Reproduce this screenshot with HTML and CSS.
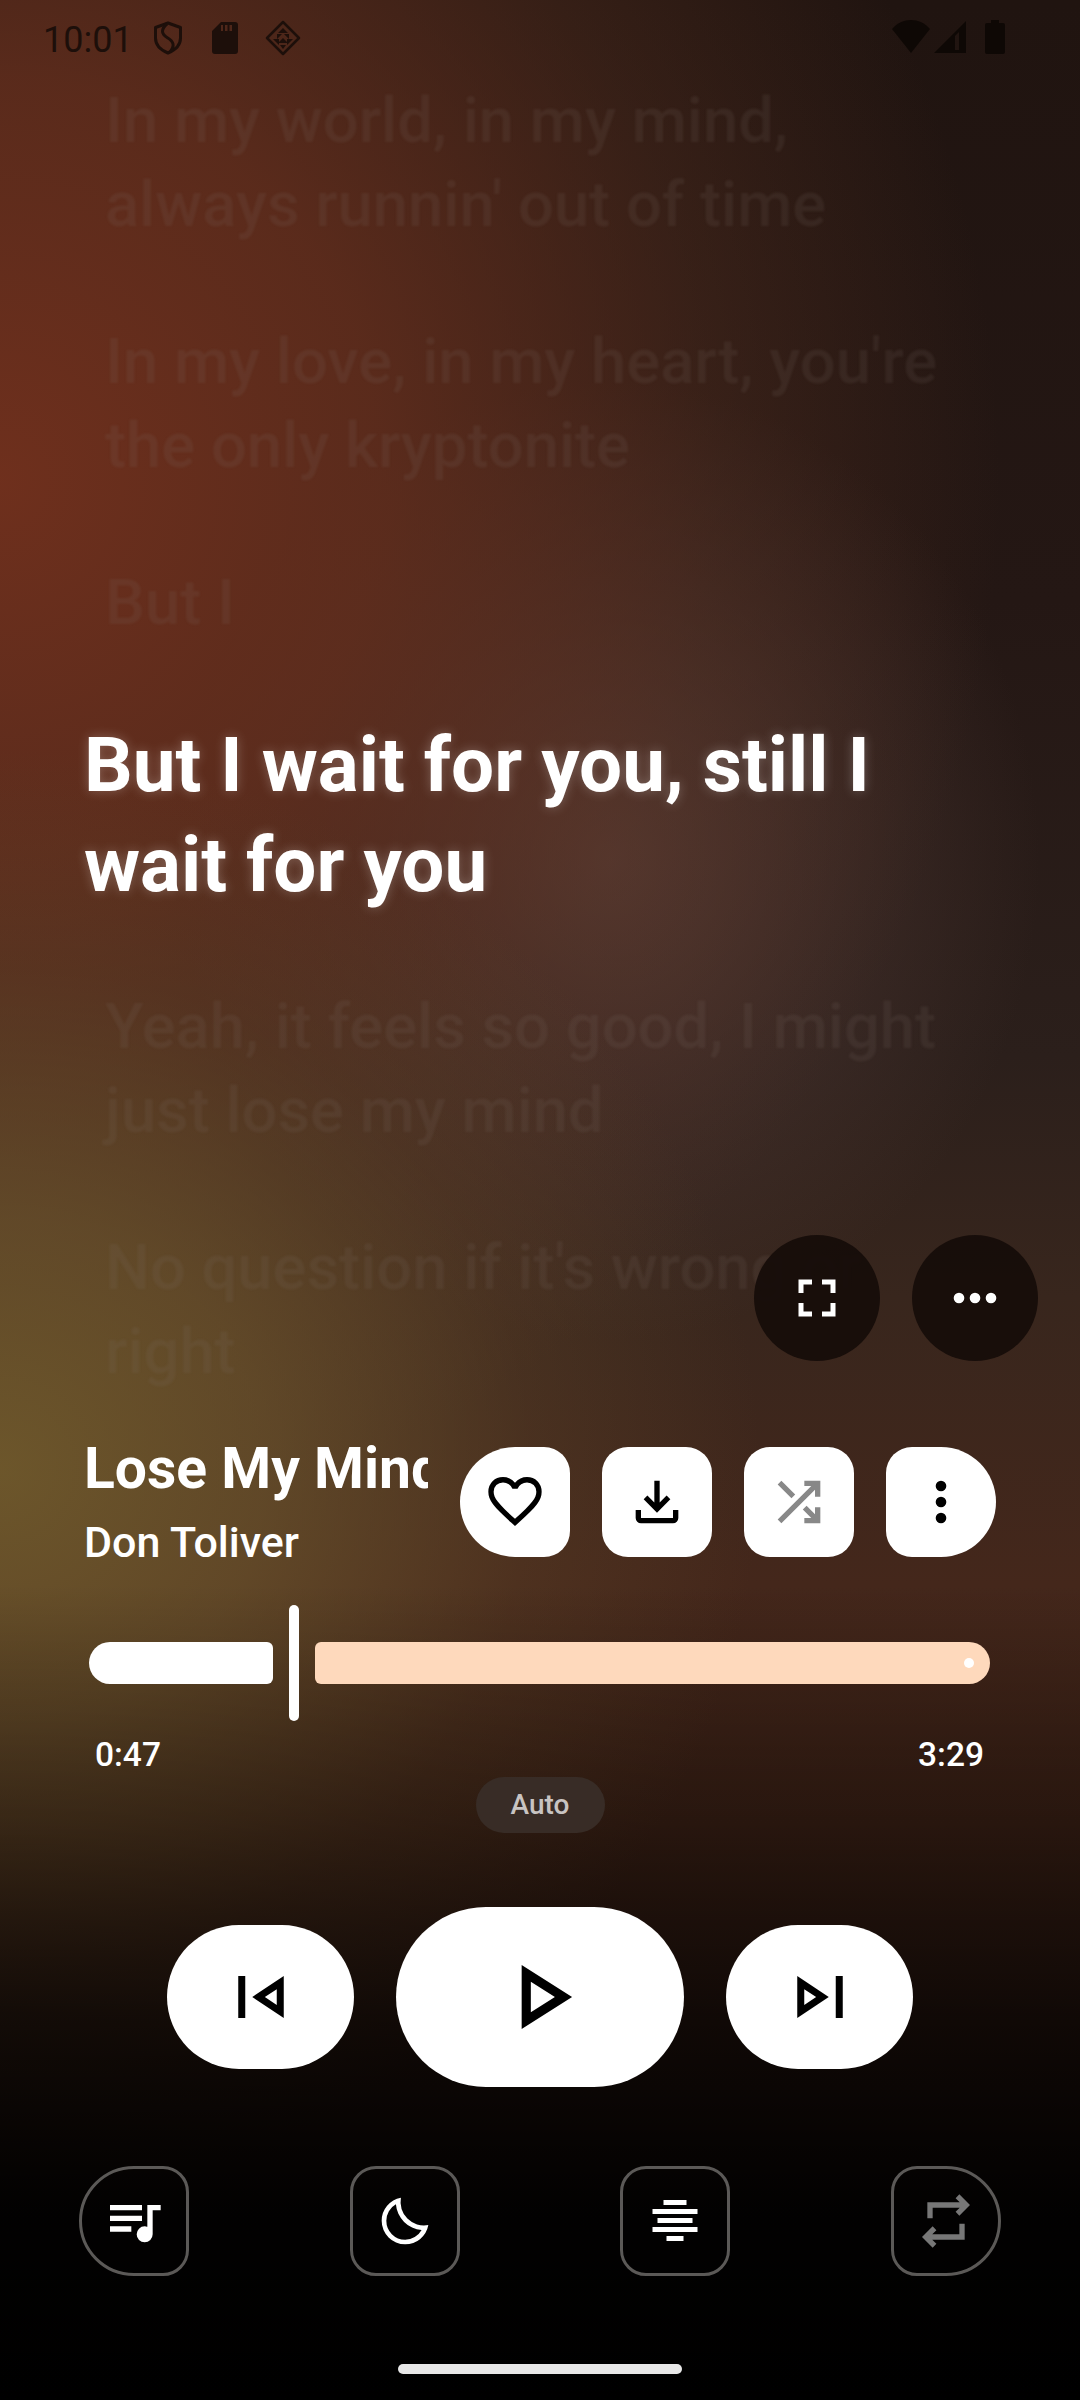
FILE: index.html
```html
<!DOCTYPE html>
<html lang="en">
<head>
<meta charset="utf-8">
<title>Lose My Mind</title>
<link rel="stylesheet" href="styles.css">
</head>
<body>
<main class="screen">
  <header class="status">
    <span class="clock">10:01</span>
    <svg class="st-shield" viewBox="0 0 30 34"><path d="M15 2 27.500 6.500V17c0 7-5 12-12.500 15C7.500 29 2.500 24 2.500 17V6.500Z" fill="none" stroke="currentColor" stroke-width="3" stroke-linejoin="round"/><path d="M14 3C8 8 8 13 14 16.500 21 20.500 22 25 17 31" fill="none" stroke="currentColor" stroke-width="3"/></svg>
    <svg class="st-sd" viewBox="0 0 26 32"><path fill-rule="evenodd" d="M9 0H23a3 3 0 0 1 3 3V29a3 3 0 0 1-3 3H3a3 3 0 0 1-3-3V9ZM13 3V9H15.500V3ZM17.500 3V9H20V3ZM9 3V9H11V3Z" fill="currentColor"/></svg>
    <svg class="st-diamond" viewBox="0 0 36 36"><path d="M18 2 34 18 18 34 2 18Z" fill="none" stroke="currentColor" stroke-width="2.500" stroke-linejoin="round"/><path d="M18 8 23 13H13ZM12 14H17L12 19ZM19 14H24V19ZM8 19H14L14 25ZM18 18 23 23H13ZM22 19H28L22 25ZM15 25H21L18 29Z" fill="currentColor"/></svg>
    <span class="st-spacer"></span>
    <svg class="st-wifi" viewBox="0 0 38 33"><path d="M0 9C5 3 12 0 19 0S33 3 38 9L19 33Z" fill="currentColor"/></svg>
    <svg class="st-signal" viewBox="0 0 32 32"><path fill-rule="evenodd" d="M32 0V32H0ZM25 11 21 15V29H25Z" fill="currentColor"/></svg>
    <svg class="st-battery" viewBox="0 0 20 34"><path d="M6 0H14V3H18a2 2 0 0 1 2 2V32a2 2 0 0 1-2 2H2a2 2 0 0 1-2-2V5a2 2 0 0 1 2-2H6Z" fill="currentColor"/></svg>
  </header>

  <section class="lyrics">
    <p class="lyric">In my world, in my mind,<br>always runnin' out of time</p>
    <p class="lyric">In my love, in my heart, you're<br>the only kryptonite</p>
    <p class="lyric">But I</p>
    <p class="lyric lyric-active">But I wait for you, still I<br>wait for you</p>
    <p class="lyric">Yeah, it feels so good, I might<br>just lose my mind</p>
    <p class="lyric">No question if it's wrong or<br>right</p>
  </section>

  <div class="float-actions">
    <button class="float-btn" type="button" aria-label="Fullscreen">
      <svg class="ic-48" viewBox="0 0 48 48"><path d="M5.500 5.500H19V10.500H10.500V19H5.500ZM29 5.500H42.500V19H37.500V10.500H29ZM5.500 29H10.500V37.500H19V42.500H5.500ZM37.500 29H42.500V42.500H29V37.500H37.500Z"/></svg>
    </button>
    <button class="float-btn" type="button" aria-label="More">
      <svg class="ic-64" viewBox="0 0 64 64"><circle cx="16" cy="32" r="5.300"/><circle cx="32" cy="32" r="5.300"/><circle cx="48" cy="32" r="5.300"/></svg>
    </button>
  </div>

  <section class="track">
    <div class="track-info">
      <h1 class="track-title">Lose My Mind</h1>
      <p class="track-artist">Don Toliver</p>
    </div>
    <button class="tile tile-left" type="button" aria-label="Like">
      <svg class="ic-64" viewBox="0 -960 960 960"><path d="m480-120-58-52q-101-91-167-157T150-447.500Q111-500 95.500-544T80-634q0-94 63-157t157-63q52 0 99 22t81 62q34-40 81-62t99-22q94 0 157 63t63 157q0 46-15.500 90T810-447.500Q771-395 705-329T538-172l-58 52Zm0-108q96-86 158-147.500t98-107q36-45.500 50-81t14-70.500q0-60-40-100t-100-40q-47 0-87 26.500T518-680h-76q-15-41-55-67.500T300-774q-60 0-100 40t-40 100q0 35 14 70.500t50 81q36 45.500 98 107T480-228Zm0-273Z"/></svg>
    </button>
    <button class="tile" type="button" aria-label="Download">
      <svg class="ic-64" viewBox="0 -960 960 960"><path d="M480-320 280-520l56-58 104 104v-326h80v326l104-104 56 58-200 200ZM240-160q-33 0-56.500-23.500T160-240v-120h80v120h480v-120h80v120q0 33-23.500 56.500T720-160H240Z"/></svg>
    </button>
    <button class="tile" type="button" aria-label="Shuffle">
      <svg class="ic-64 ic-muted" viewBox="0 -960 960 960"><path d="M560-160v-80h104L537-367l57-57 126 126v-102h80v240H560Zm-344 0-56-56 504-504H560v-80h240v240h-80v-104L216-160Zm151-377L160-744l56-56 207 207-56 56Z"/></svg>
    </button>
    <button class="tile tile-right" type="button" aria-label="Options">
      <svg class="ic-64" viewBox="0 0 64 64"><circle cx="32" cy="16" r="5.300"/><circle cx="32" cy="32" r="5.300"/><circle cx="32" cy="48" r="5.300"/></svg>
    </button>
  </section>

  <section class="slider">
    <div class="slider-played"></div>
    <div class="slider-thumb"></div>
    <div class="slider-rest"><span class="slider-stop"></span></div>
  </section>

  <div class="times"><span>0:47</span><span>3:29</span></div>
  <div class="pill">Auto</div>

  <section class="transport">
    <button class="round round-side" type="button" aria-label="Previous">
      <svg class="ic-84" viewBox="0 -960 960 960"><path d="M220-240v-480h80v480h-80Zm520 0L380-480l360-240v480Zm-80-240Zm0 90v-180l-136 90 136 90Z"/></svg>
    </button>
    <button class="round round-main" type="button" aria-label="Play">
      <svg class="ic-110" viewBox="0 -960 960 960"><path d="M320-200v-560l440 280-440 280Zm80-280Zm0 134 210-134-210-134v268Z"/></svg>
    </button>
    <button class="round round-side" type="button" aria-label="Next">
      <svg class="ic-84" viewBox="0 -960 960 960"><path d="M660-240v-480h80v480h-80Zm-440 0v-480l360 240-360 240Zm80-240Zm0 90 136-90-136-90v180Z"/></svg>
    </button>
  </section>

  <nav class="tools">
    <button class="tool tile-left" type="button" aria-label="Queue">
      <svg class="ic-64" viewBox="0 -960 960 960"><path d="M640-160q-50 0-85-35t-35-85q0-50 35-85t85-35q11 0 21 1.500t19 6.500v-328h200v80H760v360q0 50-35 85t-85 35ZM120-320v-80h320v80H120Zm0-160v-80h480v80H120Zm0-160v-80h480v80H120Z"/></svg>
    </button>
    <button class="tool" type="button" aria-label="Sleep timer">
      <svg class="ic-56" viewBox="0 -960 960 960"><path d="M484-80q-84 0-157.500-32t-128-86.500Q144-253 112-326.500T80-484q0-146 93-257.500T410-880q-18 99 11 193.500T521-521q71 71 165.500 100T880-410q-26 144-138 237T484-80Zm0-80q88 0 163-44t118-121q-86-8-163-43.500T464-465q-61-61-97-138t-43-163q-77 43-120.500 118.500T160-484q0 135 94.500 229.500T484-160Zm-20-305Z"/></svg>
    </button>
    <button class="tool" type="button" aria-label="Align lyrics">
      <svg class="ic-64" viewBox="0 0 64 64"><rect x="20.500" y="11" width="23" height="5"/><rect x="9.500" y="20" width="45" height="5"/><rect x="14.500" y="29" width="35" height="5"/><rect x="9.500" y="38" width="45" height="5"/><rect x="23.500" y="47" width="17" height="5"/></svg>
    </button>
    <button class="tool tile-right" type="button" aria-label="Repeat">
      <svg class="ic-64 ic-dim" viewBox="0 -960 960 960"><path d="M280-80 120-240l160-160 56 58-62 62h406v-160h80v240H274l62 62-56 58Zm-80-440v-240h486l-62-62 56-58 160 160-160 160-56-58 62-62H280v160h-80Z"/></svg>
    </button>
  </nav>

  <div class="home-bar"></div>
</main>
</body>
</html>
```

FILE: styles.css
```css
* { box-sizing: border-box; }

html, body {
  margin: 0;
  padding: 0;
  background: #000;
}

.screen {
  position: relative;
  width: 1080px;
  height: 2400px;
  overflow: hidden;
  display: flex;
  flex-direction: column;
  font-family: Roboto, "Liberation Sans", sans-serif;
  color: #fff;
  background:
    linear-gradient(180deg, rgba(0,0,0,0) 66%, rgba(0,0,0,.36) 76%, rgba(0,0,0,.72) 84%, rgba(0,0,0,.96) 92%, #000 100%),
    radial-gradient(760px 720px at 0 1470px, rgba(112,90,44,.92) 0%, rgba(108,84,44,.72) 35%, rgba(100,72,40,.3) 70%, rgba(100,72,40,0) 100%),
    radial-gradient(1000px 1050px at 0 480px, rgba(112,48,29,.98) 0%, rgba(104,48,30,.8) 38%, rgba(96,52,34,.34) 72%, rgba(96,52,34,0) 100%),
    radial-gradient(430px 480px at 610px 860px, rgba(88,62,56,.8) 0%, rgba(82,58,52,.4) 55%, rgba(78,56,50,0) 100%),
    linear-gradient(180deg, #201410 0%, #241714 25%, #2b1f1b 44%, #38261d 54%, #44271b 66%, #3e2216 76%, #331c14 100%);
}

/* status bar */
.status {
  flex: none;
  height: 78px;
  display: flex;
  align-items: flex-start;
  padding: 20px 75px 0 43px;
  color: #1d0f0a;
}
.clock {
  font-size: 36px;
  line-height: 40px;
  margin-right: 20px;
}
.st-shield { width: 30px; height: 34px; margin: 1px 29px 0 0; }
.st-sd { width: 26px; height: 32px; margin: 2px 27px 0 0; }
.st-diamond { width: 36px; height: 36px; }
.st-spacer { flex: 1; }
.st-wifi { width: 38px; height: 33px; margin-right: 4px; color: #0e0805; }
.st-signal { width: 32px; height: 32px; margin: 1px 19px 0 0; color: #0e0805; }
.st-battery { width: 20px; height: 34px; color: #0e0805; }

/* lyrics */
.lyrics {
  flex: none;
  height: 1369px;
  padding-left: 105px;
  overflow: hidden;
}
.lyric {
  margin: 0 0 73px;
  font-size: 63.300px;
  line-height: 84px;
  font-weight: 500;
  color: rgba(125,112,108,.14);
  filter: blur(1px);
  white-space: nowrap;
}
.lyric-active {
  margin: -2px 0 69px -21px;
  font-size: 76.400px;
  line-height: 100px;
  font-weight: 700;
  color: #fff;
  filter: none;
  text-shadow: 0 0 12px rgba(255,255,255,.25);
}

/* floating fullscreen / more */
.float-actions {
  position: absolute;
  top: 1235px;
  right: 42px;
  display: flex;
  gap: 32px;
}
.float-btn {
  width: 126px;
  height: 126px;
  padding: 0;
  border: 0;
  border-radius: 50%;
  background: rgba(22,13,9,.95);
  display: flex;
  align-items: center;
  justify-content: center;
  fill: #fff;
}

/* icon sizes */
.ic-48 { width: 48px; height: 48px; }
.ic-56 { width: 56px; height: 56px; }
.ic-64 { width: 64px; height: 64px; }
.ic-84 { width: 84px; height: 84px; }
.ic-110 { width: 110px; height: 110px; }
.ic-muted { fill: #888; }
.ic-dim { fill: #777; }

/* track row */
.track {
  flex: none;
  height: 110px;
  display: flex;
  gap: 32px;
  padding-left: 84px;
}
.track-info {
  flex: none;
  width: 344px;
  white-space: nowrap;
}
.track-title {
  margin: -10px 0 0;
  font-size: 57px;
  line-height: 64px;
  font-weight: 700;
  overflow: hidden;
}
.track-artist {
  margin: 18px 0 0;
  font-size: 43px;
  line-height: 47px;
  font-weight: 500;
}
.tile {
  flex: none;
  width: 110px;
  height: 110px;
  padding: 0;
  border: 0;
  border-radius: 26px;
  background: #fff;
  display: flex;
  align-items: center;
  justify-content: center;
  fill: #000;
}
.tile-left { border-radius: 55px 26px 26px 55px; }
.tile-right { border-radius: 26px 55px 55px 26px; }

/* slider */
.slider {
  flex: none;
  height: 116px;
  margin-top: 48px;
  display: flex;
  align-items: center;
  gap: 16px;
  padding: 0 90px 0 89px;
}
.slider-played {
  width: 184px;
  height: 42px;
  background: #fff;
  border-radius: 21px 6px 6px 21px;
}
.slider-thumb {
  width: 10px;
  height: 116px;
  background: #fff;
  border-radius: 5px;
}
.slider-rest {
  flex: 1;
  height: 42px;
  background: #fed9bc;
  border-radius: 6px 21px 21px 6px;
  display: flex;
  align-items: center;
  justify-content: flex-end;
  padding-right: 16px;
}
.slider-stop {
  width: 10px;
  height: 10px;
  border-radius: 50%;
  background: #fff;
}

/* times */
.times {
  flex: none;
  margin-top: 15px;
  display: flex;
  justify-content: space-between;
  padding: 0 96px 0 95px;
  font-size: 33.500px;
  line-height: 38px;
  font-weight: 500;
}
.pill {
  flex: none;
  align-self: center;
  width: 129px;
  height: 56px;
  margin-top: 3px;
  border-radius: 28px;
  background: #382c26;
  color: #c8c4c2;
  font-size: 28px;
  font-weight: 500;
  line-height: 56px;
  text-align: center;
}

/* transport */
.transport {
  flex: none;
  height: 180px;
  margin-top: 74px;
  display: flex;
  align-items: center;
  justify-content: center;
  gap: 42px;
}
.round {
  padding: 0;
  border: 0;
  background: #fff;
  display: flex;
  align-items: center;
  justify-content: center;
  fill: #000;
}
.round-side { width: 187px; height: 144px; border-radius: 72px; }
.round-main { width: 288px; height: 180px; border-radius: 90px; }

/* bottom tools */
.tools {
  flex: none;
  height: 110px;
  margin-top: 79px;
  padding: 0 79px;
  display: flex;
  justify-content: space-between;
}
.tool {
  width: 110px;
  height: 110px;
  padding: 0;
  background: transparent;
  border: 3px solid #5b5957;
  border-radius: 26px;
  display: flex;
  align-items: center;
  justify-content: center;
  fill: #fff;
}
.tool.tile-left { border-radius: 55px 26px 26px 55px; }
.tool.tile-right { border-radius: 26px 55px 55px 26px; }

.home-bar {
  flex: none;
  align-self: center;
  width: 284px;
  height: 10px;
  margin-top: 88px;
  border-radius: 5px;
  background: #e8e8e8;
}
```
